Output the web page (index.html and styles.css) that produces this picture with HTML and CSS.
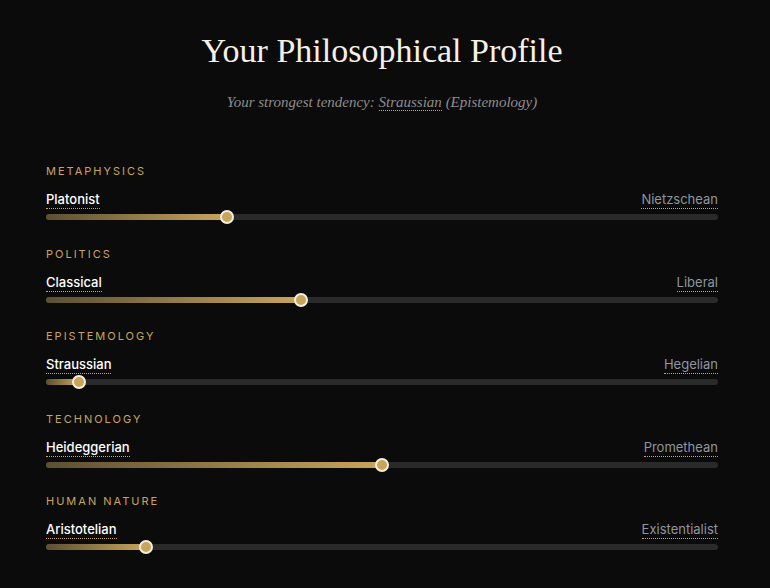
FILE: index.html
```html
<!DOCTYPE html>
<html lang="en">
<head>
<meta charset="utf-8">
<title>Your Philosophical Profile</title>
<link rel="stylesheet" href="styles.css">
</head>
<body>
<main class="profile">
  <header class="head">
    <h1 class="title">Your Philosophical Profile</h1>
    <p class="subtitle">Your strongest tendency: <span class="dotted">Straussian</span> (Epistemology)</p>
  </header>

  <section class="axis">
    <h2 class="axis-name">Metaphysics</h2>
    <div class="ends"><span class="end end-left">Platonist</span><span class="end end-right">Nietzschean</span></div>
    <div class="track"><div class="fill" style="width:181px"></div><div class="thumb" style="left:181px"></div></div>
  </section>

  <section class="axis">
    <h2 class="axis-name">Politics</h2>
    <div class="ends"><span class="end end-left">Classical</span><span class="end end-right">Liberal</span></div>
    <div class="track"><div class="fill" style="width:255px"></div><div class="thumb" style="left:255px"></div></div>
  </section>

  <section class="axis">
    <h2 class="axis-name">Epistemology</h2>
    <div class="ends"><span class="end end-left">Straussian</span><span class="end end-right">Hegelian</span></div>
    <div class="track"><div class="fill" style="width:33px"></div><div class="thumb" style="left:33px"></div></div>
  </section>

  <section class="axis">
    <h2 class="axis-name">Technology</h2>
    <div class="ends"><span class="end end-left">Heideggerian</span><span class="end end-right">Promethean</span></div>
    <div class="track"><div class="fill" style="width:336px"></div><div class="thumb" style="left:336px"></div></div>
  </section>

  <section class="axis">
    <h2 class="axis-name">Human Nature</h2>
    <div class="ends"><span class="end end-left">Aristotelian</span><span class="end end-right">Existentialist</span></div>
    <div class="track"><div class="fill" style="width:100px"></div><div class="thumb" style="left:100px"></div></div>
  </section>
</main>
</body>
</html>
```
FILE: styles.css
```css
html, body {
  margin: 0;
  padding: 0;
  background: #0b0b0b;
  height: 100%;
}
body {
  font-family: Inter, "Noto Sans", sans-serif;
  color: #f2eee6;
}
.profile {
  width: 672px;
  margin-left: 46px;
  padding-top: 28px;
  display: flex;
  flex-direction: column;
}
.head {
  text-align: center;
  margin-bottom: 52px;
}
.title {
  margin: 0;
  font-family: "Liberation Serif", "DejaVu Serif", serif;
  font-weight: 400;
  font-size: 34px;
  line-height: 46px;
  color: #f6f1e7;
}
.subtitle {
  margin: 18px 0 0;
  font-family: "Liberation Serif", "DejaVu Serif", serif;
  font-style: italic;
  font-size: 15px;
  line-height: 20px;
  color: #8d8d8d;
}
.dotted {
  border-bottom: 1px dotted #c9a55c;
}
.axis {
  display: flex;
  flex-direction: column;
  margin-bottom: 26.5px;
}
.axis-name {
  margin: 0;
  font-size: 11px;
  line-height: 14px;
  font-weight: 400;
  text-transform: uppercase;
  letter-spacing: 2px;
  color: #c9a55c;
}
.ends {
  display: flex;
  justify-content: space-between;
  align-items: flex-end;
  margin-top: 13px;
  font-size: 13px;
  line-height: 16px;
}
.end {
  border-bottom: 1px dotted #c9a55c;
  padding-bottom: 1px;
}
.end-left {
  color: #ffffff;
  font-weight: 500;
}
.end-right {
  color: #8e969e;
}
.track {
  position: relative;
  height: 6px;
  margin-top: 5px;
  border-radius: 3px;
  background: #2a2a2a;
}
.fill {
  height: 100%;
  border-radius: 3px;
  background: linear-gradient(90deg, #5c4f33 0%, #c9a55c 100%);
}
.thumb {
  position: absolute;
  top: 50%;
  width: 10px;
  height: 10px;
  margin: -7px 0 0 -7px;
  border-radius: 50%;
  background: #c9a55c;
  border: 2px solid #f6efe0;
}
```
